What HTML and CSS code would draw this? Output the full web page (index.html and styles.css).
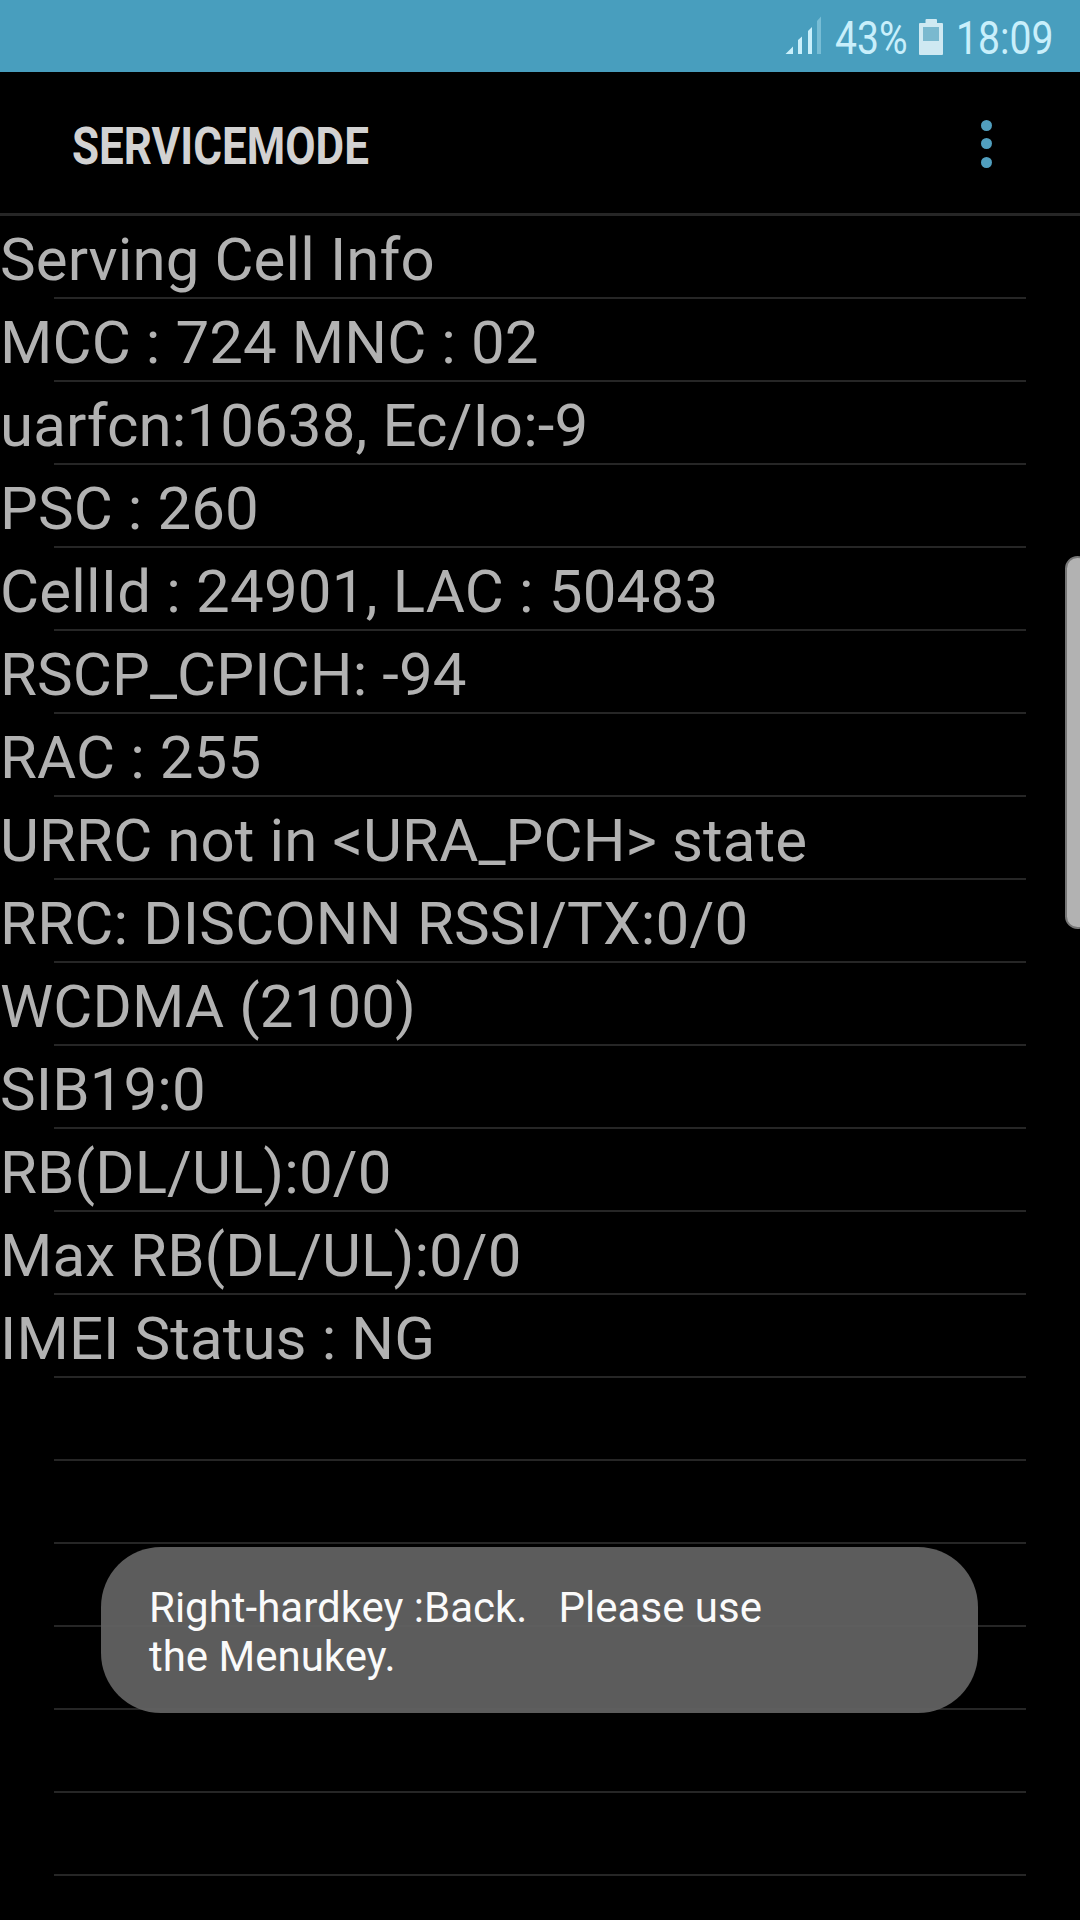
FILE: index.html
```
<!DOCTYPE html>
<html lang="en">
<head>
<meta charset="UTF-8">
<meta name="viewport" content="width=device-width, initial-scale=1.0">
<title>ServiceMode</title>
<link rel="stylesheet" href="styles.css">
</head>
<body>
<div class="status-bar">
    <svg class="signal" width="38" height="40" viewBox="0 0 38 40">
        <path d="M0.5 39H8V31.5ZM13 39V25L17 21.500V39ZM23 39V16L27 12V39Z" fill="#c9effb"/>
        <path d="M32 39V6L36 1.500V39Z" fill="#78bdd5"/>
    </svg>
    <span class="percent"><span class="narrow">43%</span></span>
    <svg class="battery" width="24" height="36" viewBox="0 0 24 36">
        <path d="M6.500 4V1Q6.500 0 7.500 0H17Q18 0 18 1V4H23Q24 4 24 5V35Q24 36 23 36H1Q0 36 0 35V5Q0 4 1 4Z" fill="#cfe9f2"/>
        <rect x="4" y="8" width="16" height="14" fill="#7ab9cf"/>
    </svg>
    <span class="clock"><span class="narrow">18:09</span></span>
</div>
<div class="header">
    <h1 class="title">SERVICEMODE</h1>
    <div class="menu">
        <span class="dot"></span>
        <span class="dot"></span>
        <span class="dot"></span>
    </div>
</div>
<div class="list">
    <div class="row">Serving Cell Info</div>
    <div class="row">MCC : 724 MNC : 02</div>
    <div class="row">uarfcn:10638, Ec/Io:-9</div>
    <div class="row">PSC : 260</div>
    <div class="row wide">CellId : 24901, LAC : 50483</div>
    <div class="row">RSCP_CPICH: -94</div>
    <div class="row">RAC : 255</div>
    <div class="row">URRC not in &lt;URA_PCH&gt; state</div>
    <div class="row wide">RRC: DISCONN RSSI/TX:0/0</div>
    <div class="row">WCDMA (2100)</div>
    <div class="row">SIB19:0</div>
    <div class="row">RB(DL/UL):0/0</div>
    <div class="row">Max RB(DL/UL):0/0</div>
    <div class="row">IMEI Status : NG</div>
    <div class="row"></div>
    <div class="row"></div>
    <div class="row"></div>
    <div class="row"></div>
    <div class="row"></div>
    <div class="row"></div>
</div>
<div class="edge-handle"></div>
<div class="toast">Right-hardkey :Back.   Please use
the Menukey.</div>
</body>
</html>
```

FILE: styles.css
```
* {
    box-sizing: border-box;
}

body {
    position: relative;
    width: 1080px;
    height: 1920px;
    margin: 0;
    overflow: hidden;
    background-color: #000;
    font-family: Roboto, sans-serif;
}

.status-bar {
    display: flex;
    height: 72px;
    padding: 15px 0 0 785px;
    background-color: #489ebe;
    color: #c9effb;
    font-size: 46px;
    line-height: 46px;
}

.signal {
    margin-right: 12px;
}

.percent {
    width: 84px;
}

.battery {
    margin: 4px 13px 0 0;
}

.narrow {
    display: inline-block;
    transform: scaleX(0.85);
    transform-origin: 0 0;
}

.header {
    display: flex;
    justify-content: space-between;
    height: 144px;
    padding: 44px 88px 0 72px;
    border-bottom: 3px solid #262626;
}

.title {
    margin: 1px 0 0;
    color: #d2d2d2;
    font-size: 52px;
    font-weight: bold;
    line-height: 60px;
    transform: scaleX(0.846);
    transform-origin: 0 0;
}

.menu {
    display: flex;
    flex-direction: column;
    gap: 7.300px;
    padding-top: 4px;
}

.dot {
    width: 11px;
    height: 11px;
    border-radius: 50%;
    background-color: #519fbf;
}

.row {
    height: 83px;
    padding-top: 3px;
    background: linear-gradient(#262626, #262626) 54px 100% / 972px 2px no-repeat;
    color: #b2b2b2;
    font-size: 60px;
    letter-spacing: 0.1px;
    line-height: 81px;
    white-space: nowrap;
}

.wide {
    letter-spacing: 0.18px;
}

.edge-handle {
    position: absolute;
    top: 556px;
    right: -10px;
    width: 25px;
    height: 373px;
    border: 2px solid #767676;
    border-radius: 20px;
    background-color: #b2b2b2;
}

.toast {
    position: absolute;
    top: 1547px;
    left: 101px;
    width: 877px;
    height: 166px;
    padding: 36px 48px;
    border-radius: 60px;
    background-color: rgba(97, 97, 97, 0.95);
    color: #fafafa;
    font-size: 42px;
    line-height: 49px;
    white-space: pre;
}
```
